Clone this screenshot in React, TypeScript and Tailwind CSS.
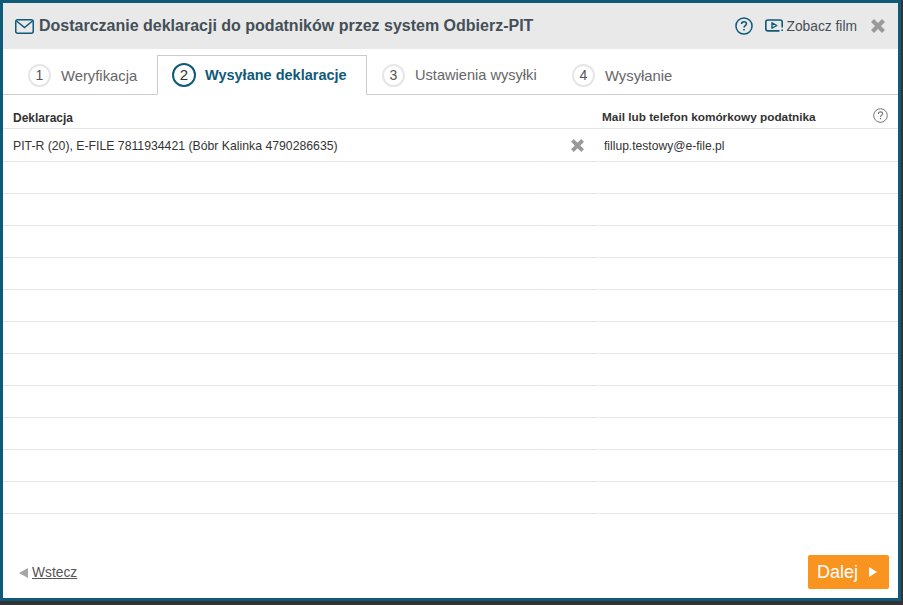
import React from "react";

const TEAL = "#0f5a78";

function Step({ n, label, active, box, size }: { n: number; label: string; active?: boolean; box?: string; size?: string }) {
  return (
    <div
      className={
        active
          ? "flex items-center h-[40px] w-[210px] pl-[14px] bg-white border border-[#cccccc] border-b-white -mb-px shrink-0"
          : `flex items-center h-[40px] pt-[2px] shrink-0 ${box}`
      }
    >
      <span
        className={
          active
            ? "flex items-center justify-center w-[24px] h-[24px] rounded-full border-2 border-[#0f5a78] text-[15px] text-[#333333]"
            : "flex items-center justify-center w-[23px] h-[23px] rounded-full border-2 border-[#e6e6e6] text-[14px] text-[#555555]"
        }
      >
        {n}
      </span>
      <span
        className={
          active
            ? "ml-[9px] pt-[2px] text-[14.5px] font-bold text-[#0f5a78] whitespace-nowrap"
            : `ml-[10px] pt-[2px] ${size} text-[#666666] whitespace-nowrap`
        }
      >
        {label}
      </span>
    </div>
  );
}

function Row({ left, right, cross, tall }: { left?: string; right?: string; cross?: boolean; tall?: boolean }) {
  return (
    <div className={tall ? "flex h-[33px] text-[#333333]" : "flex h-[32px] text-[#333333]"}>
      <div className="w-[536px] border-b border-[#e5e5e5] pl-[10px] pt-[2px] flex items-center whitespace-nowrap text-[12.26px]">{left}</div>
      <div className="w-[59px] ml-px border-b border-[#e5e5e5] flex items-center justify-center pl-[15px]">
        {cross && <Cross size={13} />}
      </div>
      <div className="flex-1 ml-px border-b border-[#e5e5e5] pl-[4px] pt-[2px] flex items-center text-[12.1px]">{right}</div>
    </div>
  );
}

function Cross({ size }: { size: number }) {
  return (
    <svg width={size} height={size} viewBox="0 0 14 14" fill="none" aria-hidden="true">
      <path d="M3 3 L11 11 M11 3 L3 11" stroke="#999999" strokeWidth="4.2" strokeLinecap="square" />
    </svg>
  );
}

export default function App() {
  return (
    <div className="w-[903px] h-[605px] bg-[#333333] font-['Liberation_Sans',Arial,sans-serif]">
      <div className="w-[901px] h-[601px] border-[3px] border-[#0f5a78] bg-white flex flex-col">
        <header className="h-[46px] shrink-0 bg-[#e9e9e9] flex items-center pl-[12px] pr-[13px]">
          <svg width="19" height="15" viewBox="0 0 19 15" fill="none" stroke={TEAL} strokeWidth="1.5" aria-hidden="true">
            <rect x="0.75" y="0.75" width="17.5" height="13.5" rx="2" />
            <path d="M1.5 2 L9.5 8.5 L17.5 2" />
          </svg>
          <h1 className="ml-[5px] text-[16px] font-bold text-[#444f57] whitespace-nowrap">
            Dostarczanie deklaracji do podatników przez system Odbierz-PIT
          </h1>
          <div className="ml-auto flex items-center">
            <svg width="18" height="18" viewBox="0 0 19 19" fill="none" aria-hidden="true">
              <circle cx="9.5" cy="9.5" r="8.5" stroke={TEAL} strokeWidth="1.6" />
              <path d="M6.9 7.4 C6.9 5.8 8.1 5 9.5 5 C11 5 12.1 5.9 12.1 7.2 C12.1 9 9.5 9.1 9.5 11.2" stroke={TEAL} strokeWidth="1.6" />
              <rect x="8.7" y="12.6" width="1.6" height="1.7" fill={TEAL} />
            </svg>
            <svg className="ml-[12px] -mt-px" width="18" height="13" viewBox="0 0 18 13" fill="none" aria-hidden="true">
              <path d="M14.5 11.9 H3 C1.8 11.9 0.8 11 0.8 9.8 V3 C0.8 1.9 1.8 1 3 1 H15 C16.2 1 17.2 1.9 17.2 3 V8.5 M17.2 10.5 V11.9" stroke={TEAL} strokeWidth="1.6" />
              <path d="M7 3.8 L11.8 6.5 L7 9.2 Z" stroke={TEAL} strokeWidth="1.4" strokeLinejoin="round" />
            </svg>
            <span className="ml-[3px] pt-[2px] text-[13.8px] text-[#444f57]">Zobacz film</span>
            <span className="ml-[14px] flex">
              <Cross size={14} />
            </span>
          </div>
        </header>

        <nav className="h-[46px] shrink-0 border-b border-[#cccccc] flex items-end pl-[10px]">
          <Step n={1} label="Weryfikacja" box="w-[144px] pl-[15px]" size="text-[14.8px]" />
          <Step n={2} label="Wysyłane deklaracje" active />
          <Step n={3} label="Ustawienia wysyłki" box="w-[191px] pl-[15px]" size="text-[14.6px]" />
          <Step n={4} label="Wysyłanie" box="pl-[14px]" size="text-[14.8px]" />
        </nav>

        <div className="flex h-[34px] shrink-0 border-b border-[#e5e5e5] font-bold text-[#333333]">
          <div className="w-[597px] pl-[10px] pt-[12px] flex items-center text-[12px]">Deklaracja</div>
          <div className="flex-1 pl-[2px] pt-[12px] flex items-center whitespace-nowrap text-[11.8px]">Mail lub telefon komórkowy podatnika</div>
          <div className="flex items-center pr-[10px] pt-[8px]">
            <svg width="15" height="15" viewBox="0 0 15 15" fill="none" aria-hidden="true">
              <circle cx="7.5" cy="7.5" r="6.8" stroke="#777777" strokeWidth="1" />
              <path d="M5.4 5.9 C5.4 4.6 6.3 3.9 7.5 3.9 C8.7 3.9 9.6 4.7 9.6 5.7 C9.6 7.1 7.5 7.2 7.5 8.9" stroke="#777777" strokeWidth="1.1" />
              <rect x="6.9" y="10" width="1.2" height="1.3" fill="#777777" />
            </svg>
          </div>
        </div>

        <div className="flex flex-col">
          <Row tall left="PIT-R (20), E-FILE 7811934421 (Bóbr Kalinka 4790286635)" right="fillup.testowy@e-file.pl" cross />
          {Array.from({ length: 11 }).map((_, i) => (
            <Row key={i} />
          ))}
        </div>

        <footer className="mt-auto flex items-center justify-between pl-[16px] pr-[9px] pb-[9px]">
          <div className="flex items-center pt-[2px]">
            <span className="w-0 h-0 border-y-[5.5px] border-y-transparent border-r-[9px] border-r-[#a6a6a6]" />
            <a className="ml-[4px] text-[13.8px] text-[#555555] underline" href="#">Wstecz</a>
          </div>
          <button className="w-[81px] h-[34px] rounded-[2px] bg-[#f99420] text-white text-[18px] flex items-center pl-[9px]">
            Dalej
            <span className="ml-[11px] w-0 h-0 border-y-[5px] border-y-transparent border-l-[8px] border-l-white" />
          </button>
        </footer>
      </div>
    </div>
  );
}
